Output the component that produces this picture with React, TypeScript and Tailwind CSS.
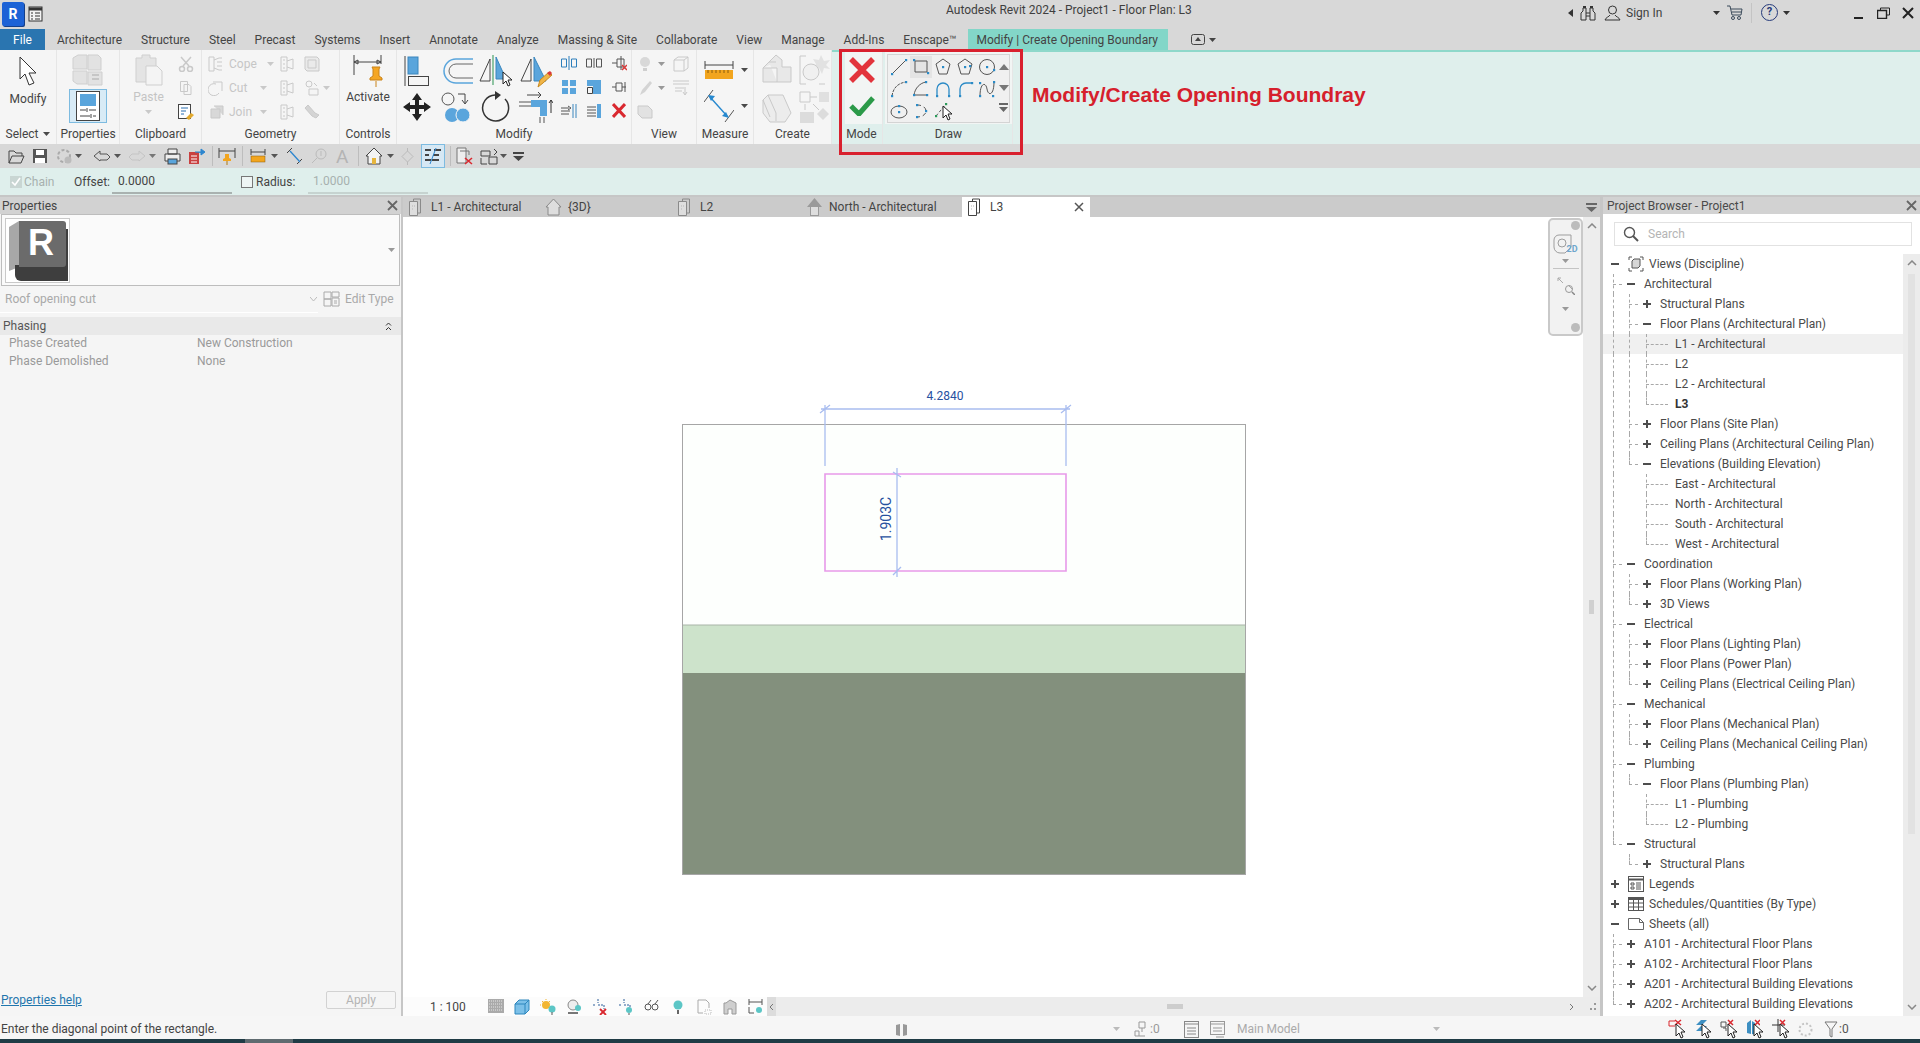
import React from 'react';

const G = '#c9c9c9';
const D = '#4a4a4a';
const B = '#5aa5dc';

const I = ({ w, h, children, className = '' }: { w: number; h: number; children?: React.ReactNode; className?: string }) => (
  <svg width={w} height={h} viewBox={`0 0 ${w} ${h}`} fill="none" className={`shrink-0 ${className}`}>
    {children}
  </svg>
);

const Caret = ({ c = D, className = '' }: { c?: string; className?: string }) => (
  <I w={7} h={4} className={className}><path d="M0 0h7L3.5 4z" fill={c} /></I>
);

const Panel = ({ w, label, children, dim }: { w: string; label: React.ReactNode; children?: React.ReactNode; dim?: boolean }) => (
  <div className={`${w} flex flex-col border-r border-[#e6e6e6]`}>
    <div className="h-[74px] flex">{children}</div>
    <div className={`h-[20px] flex items-center justify-center ${dim ? 'bg-[#dfefec]' : ''}`}>{label}</div>
  </div>
);

const tabs = ['Architecture', 'Structure', 'Steel', 'Precast', 'Systems', 'Insert', 'Annotate', 'Analyze', 'Massing & Site', 'Collaborate', 'View', 'Manage', 'Add-Ins', 'Enscape™'];

type Row = { d: number; t: string; o?: '+' | '-'; kind?: 'views' | 'legend' | 'sched' | 'sheet'; bold?: boolean; sel?: boolean };

const tree: Row[] = [
  { d: 0, t: 'Views (Discipline)', o: '-', kind: 'views' },
  { d: 1, t: 'Architectural', o: '-' },
  { d: 2, t: 'Structural Plans', o: '+' },
  { d: 2, t: 'Floor Plans (Architectural Plan)', o: '-' },
  { d: 3, t: 'L1 - Architectural', sel: true },
  { d: 3, t: 'L2' },
  { d: 3, t: 'L2 - Architectural' },
  { d: 3, t: 'L3', bold: true },
  { d: 2, t: 'Floor Plans (Site Plan)', o: '+' },
  { d: 2, t: 'Ceiling Plans (Architectural Ceiling Plan)', o: '+' },
  { d: 2, t: 'Elevations (Building Elevation)', o: '-' },
  { d: 3, t: 'East - Architectural' },
  { d: 3, t: 'North - Architectural' },
  { d: 3, t: 'South - Architectural' },
  { d: 3, t: 'West - Architectural' },
  { d: 1, t: 'Coordination', o: '-' },
  { d: 2, t: 'Floor Plans (Working Plan)', o: '+' },
  { d: 2, t: '3D Views', o: '+' },
  { d: 1, t: 'Electrical', o: '-' },
  { d: 2, t: 'Floor Plans (Lighting Plan)', o: '+' },
  { d: 2, t: 'Floor Plans (Power Plan)', o: '+' },
  { d: 2, t: 'Ceiling Plans (Electrical Ceiling Plan)', o: '+' },
  { d: 1, t: 'Mechanical', o: '-' },
  { d: 2, t: 'Floor Plans (Mechanical Plan)', o: '+' },
  { d: 2, t: 'Ceiling Plans (Mechanical Ceiling Plan)', o: '+' },
  { d: 1, t: 'Plumbing', o: '-' },
  { d: 2, t: 'Floor Plans (Plumbing Plan)', o: '-' },
  { d: 3, t: 'L1 - Plumbing' },
  { d: 3, t: 'L2 - Plumbing' },
  { d: 1, t: 'Structural', o: '-' },
  { d: 2, t: 'Structural Plans', o: '+' },
  { d: 0, t: 'Legends', o: '+', kind: 'legend' },
  { d: 0, t: 'Schedules/Quantities (By Type)', o: '+', kind: 'sched' },
  { d: 0, t: 'Sheets (all)', o: '-', kind: 'sheet' },
  { d: 1, t: 'A101 - Architectural Floor Plans', o: '+' },
  { d: 1, t: 'A102 - Architectural Floor Plans', o: '+' },
  { d: 1, t: 'A201 - Architectural Building Elevations', o: '+' },
  { d: 1, t: 'A202 - Architectural Building Elevations', o: '+' },
];

const railLeft = ['', 'left-[10px]', 'left-[26px]', 'left-[43px]'];
const dashW = ['', 'w-[9px]', 'w-[9px]', 'w-[22px]'];
const indent = ['pl-[7px]', 'pl-[23px]', 'pl-[39px]', 'pl-[72px]'];
const textGap = ['ml-[5px]', 'ml-[8px]', 'ml-[8px]', ''];

const continues = (i: number, level: number) => {
  for (let j = i + 1; j < tree.length; j++) {
    if (tree[j].d < level) return false;
    if (tree[j].d === level) return true;
  }
  return false;
};

const Toggle = ({ o }: { o: '+' | '-' }) => (
  <I w={10} h={10}>
    <path d="M1 5h8" stroke="#4d4d4d" strokeWidth="2" />
    {o === '+' && <path d="M5 1v8" stroke="#4d4d4d" strokeWidth="2" />}
  </I>
);

const KindIcon = ({ kind }: { kind: Row['kind'] }) => {
  if (kind === 'views')
    return (
      <I w={16} h={16} className="ml-[8px]">
        <path d="M1 4V1h3M12 1h3v3M15 12v3h-3M4 15H1v-3" stroke="#555" />
        <path d="M4 5l2-2h6v7l-2 2H4z" fill="#d6d6d6" stroke="#555" />
      </I>
    );
  if (kind === 'legend')
    return (
      <I w={16} h={16} className="ml-[8px]">
        <rect x=".5" y=".5" width="15" height="15" stroke="#555" />
        <path d="M.5 3.5h15" stroke="#555" strokeWidth="2" />
        <path d="M3 7h3v2H3zM3 11h3v2H3zM8 7h5M8 9h5M8 11h5M8 13h5" stroke="#555" />
      </I>
    );
  if (kind === 'sched')
    return (
      <I w={16} h={14} className="ml-[8px]">
        <rect x=".5" y=".5" width="15" height="13" stroke="#555" />
        <path d="M.5 2h15" stroke="#555" strokeWidth="2" />
        <path d="M.5 6h15M.5 10h15M5.5 2v12M10.5 2v12" stroke="#555" />
      </I>
    );
  return (
    <I w={16} h={12} className="ml-[8px]">
      <path d="M.5.5h11l4 4v7H.5z" stroke="#666" />
      <path d="M11.5.5v4h4" stroke="#666" />
    </I>
  );
};

const DocIcon = ({ dark }: { dark?: boolean }) => (
  <I w={17} h={18}>
    <path d="M5.5 3.5V1h7v14H10" stroke={dark ? '#444' : '#8a8a8a'} />
    <path d="M1.5 3.5h8v14h-8z" fill={dark ? '#fff' : '#dedede'} stroke={dark ? '#444' : '#8a8a8a'} />
    <path d="M4 8h3M4 11h2" stroke="#b5b5b5" strokeDasharray="1 1" />
  </I>
);

const Cursor = ({ className = '' }: { className?: string }) => (
  <I w={11} h={17} className={className}>
    <path d="M1 1v12l3-3 2 5 2-1-2-5h4z" fill="#fff" stroke="#222" />
  </I>
);

const dot = (x: number, y: number) => <rect x={x - 1} y={y - 1} width="2.2" height="2.2" fill="#2b8ac6" />;

const TitleBar = () => (
  <div className="h-[28px] flex items-center shrink-0">
    <div className="w-[946px] flex items-center">
      <div className="ml-[2px] w-[22px] h-[24px] rounded-[2px] bg-[#1c62d6] flex items-center justify-center text-white font-bold text-[14px] shadow-[1px_1px_0_#143f8a]">R</div>
      <I w={16} h={16} className="ml-[4px]">
        <rect x="1" y="1" width="13" height="14" fill="#f4f4f4" stroke="#333" />
        <path d="M1 3h13" stroke="#333" strokeWidth="3" />
        <path d="M3 7h2M7 7h5M3 10h2M7 10h5M3 13h2M7 13h5" stroke="#333" />
      </I>
    </div>
    <span className="-mt-[8px] text-[12px] text-[#3f3f3f]">Autodesk Revit 2024 - Project1 - Floor Plan: L3</span>
    <div className="ml-auto -mt-[3px] flex items-center">
      <I w={5} h={8}><path d="M5 0v8L0 4z" fill="#333" /></I>
      <I w={16} h={16} className="ml-[7px]">
        <path d="M1 15V8l2-2V3h3v12zM15 15V8l-2-2V3h-3v12zM6 8h4M6 11h4" stroke="#333" />
        <path d="M3 1h3v2H3zM10 1h3v2h-3z" fill="#333" />
      </I>
      <I w={17} h={16} className="ml-[8px]">
        <circle cx="8.500" cy="5" r="4" stroke="#333" />
        <path d="M1 15c1-3 4-3 5-5M16 15c-1-3-4-3-5-5M1 15h15" stroke="#333" />
      </I>
      <span className="ml-[5px] w-[87px] text-[12px] text-[#3f3f3f]">Sign In</span>
      <Caret c="#333" />
      <I w={16} h={15} className="ml-[7px]">
        <path d="M0 1h3l2 9h9l1-6H4" stroke="#3a4a5a" />
        <path d="M5 7h9" stroke="#3a4a5a" />
        <circle cx="6" cy="13" r="1.500" stroke="#3a4a5a" />
        <circle cx="12" cy="13" r="1.500" stroke="#3a4a5a" />
      </I>
      <div className="ml-[8px] w-px h-[20px] bg-[#c4c4c4]" />
      <div className="ml-[9px] w-[17px] h-[17px] rounded-full border border-[#24397a] flex items-center justify-center text-[#24397a] font-bold text-[11px]">?</div>
      <Caret c="#333" className="ml-[5px]" />
      <I w={10} h={4} className="ml-[64px] mt-[10px]"><path d="M0 2h9" stroke="#222" strokeWidth="2" /></I>
      <I w={13} h={12} className="ml-[13px]">
        <path d="M3.500 3V1h9v7H10" stroke="#222" />
        <path d="M.5 3.500h9v8h-9z" stroke="#222" strokeWidth="1.400" />
      </I>
      <I w={12} h={12} className="ml-[12px] mr-[6px]"><path d="M1 1l10 10M11 1L1 11" stroke="#222" strokeWidth="2" /></I>
    </div>
  </div>
);

const MenuBar = () => (
  <div className="h-[22px] flex items-end shrink-0 text-[12px] text-[#444]">
    <div className="w-[45px] h-[21px] bg-[#2a75b0] text-white flex items-center justify-center">File</div>
    <div className="pl-[12px] flex gap-[19px]">
      {tabs.map((t) => (
        <div key={t} className="h-[21px] flex items-center">{t}</div>
      ))}
    </div>
    <div className="ml-[12px] h-[21px] px-[8px] w-[200px] bg-[#83d6c8] flex items-center whitespace-nowrap">Modify | Create Opening Boundary</div>
    <I w={15} h={11} className="ml-[23px] mb-[5px]">
      <rect x=".5" y=".5" width="13" height="10" rx="2" stroke="#444" />
      <path d="M4 7h6L7 3z" fill="#444" />
    </I>
    <Caret c="#444" className="ml-[3px] mb-[8px]" />
  </div>
);

const Ribbon = () => (
  <div className="h-[94px] flex shrink-0 shadow-[inset_0_2px_0_#8ed8ca] bg-[#dfefec] text-[12px] text-[#444]">
    <div className="flex bg-[#f5f5f5] w-[832px] h-[94px]">
      <Panel w="w-[57px]" label={<span className="flex items-center gap-[5px]">Select <Caret /></span>}>
        <div className="w-full flex flex-col items-center pt-[6px]">
          <I w={22} h={32}><path d="M3 1v22l5-5 4 11 5-2-5-10h7z" fill="#fff" stroke="#333" /></I>
          <span className="mt-[2px]">Modify</span>
        </div>
      </Panel>
      <Panel w="w-[63px]" label="Properties">
        <div className="w-full flex flex-col items-center pt-[4px]">
          <I w={32} h={32}>
            <path d="M1 4l5-3h9v14H1zM16 1h10l3 3v12H16zM1 17h14v13H5l-4-3zM16 18h14v13H16z" fill="#e2e2e2" stroke="#cfcfcf" />
            <path d="M20 21h7M20 25h7" stroke="#aaa" />
          </I>
          <div className="mt-[3px] w-[38px] h-[34px] bg-[#d8ebf6] border border-[#7dbbe0] flex items-center justify-center">
            <I w={24} h={30}>
              <rect x=".5" y=".5" width="23" height="29" fill="#fff" stroke="#444" />
              <rect x="4" y="3" width="16" height="12" fill={B} />
              <path d="M4 19h6M13 19h7M4 25h10M17 25h3M11 17v4M15 23v4" stroke="#444" />
            </I>
          </div>
        </div>
      </Panel>
      <Panel w="w-[82px]" label="Clipboard">
        <div className="w-[57px] flex flex-col items-center pt-[4px] text-[#c4c4c4]">
          <I w={28} h={32}>
            <path d="M1 4h6V1h8v3h6v12h-6v12H1z" fill="#e4e4e4" stroke="#cfcfcf" />
            <path d="M11 12h11l5 5v14H11z" fill="#f4f4f4" stroke="#cfcfcf" />
          </I>
          <span className="mt-[2px]">Paste</span>
          <Caret c={G} className="mt-[4px]" />
        </div>
        <div className="flex flex-col pt-[6px] gap-[8px] ml-[1px]">
          <I w={16} h={16}><path d="M3 1l8 9M13 1L5 10" stroke={G} strokeWidth="1.500" /><circle cx="4" cy="13" r="2.500" stroke={G} strokeWidth="1.500" /><circle cx="12" cy="13" r="2.500" stroke={G} strokeWidth="1.500" /></I>
          <I w={16} h={16}><path d="M2.500 1.500h7v10h-7zM6 4.500h5l2 2v8H6z" fill="#f5f5f5" stroke={G} /></I>
          <I w={17} h={16}>
            <rect x=".5" y=".5" width="12" height="14" fill="#fff" stroke="#444" />
            <path d="M3 4h7M3 7h5M3 10h3" stroke="#2b6fb0" />
            <path d="M8 14l5-5 3 2-5 5z" fill="#e2a92d" />
          </I>
        </div>
      </Panel>
      <Panel w="w-[138px]" label="Geometry">
        <div className="flex flex-col pt-[2px] pl-[6px] text-[#c6c6c6]">
          {[
            ['Cope', 'M1 1h5v14H1zM6 4l5-2h3M6 12l5 2h3M9 6h5M9 10h5'],
            ['Cut', 'M8 4a6 6 0 1 0 3 9M5 2h9M14 2v9'],
            ['Join', 'M3 5h9v9H3zM6 2h9v9'],
          ].map(([t, d], i) => (
            <div key={t} className="h-[24px] flex items-center">
              <div className="w-[72px] flex items-center">
                <I w={16} h={16}><path d={d} stroke={G} fill={i === 2 ? '#d8d8d8' : 'none'} /></I>
                <span className={i === 0 ? 'ml-[5px] w-[33px]' : 'ml-[5px] w-[26px]'}>{t}</span>
                <Caret c={G} className="ml-[5px]" />
              </div>
              <I w={16} h={16}>
                <path d="M1 1h6v14H1zM7 5l6-2v10l-6-2M3 4h2M3 8h2M3 12h2" stroke={G} />
              </I>
              <I w={16} h={16} className="ml-[8px]">
                {i === 0 && <path d="M1 1h12l2 2v12H3l-2-2zM4 4h8v8H4z" stroke={G} fill="#eaeaea" />}
                {i === 1 && <><circle cx="5" cy="4" r="3" stroke={G} /><path d="M5 9h9v6H5zM10 3l3 3" stroke={G} /></>}
                {i === 2 && <path d="M1 4l3-3 7 8 4 2-3 3-4-2z" fill="#d4d4d4" stroke={G} />}
              </I>
              {i === 1 && <Caret c={G} className="ml-[3px]" />}
            </div>
          ))}
        </div>
      </Panel>
      <Panel w="w-[57px]" label="Controls">
        <div className="w-full flex flex-col items-center pt-[4px]">
          <I w={30} h={34}>
            <path d="M1 1v20M28 1v9M1 8h27M1 8l4-2v4zM28 8l-4-2v4z" stroke="#444" />
            <path d="M19 13h8l-1 2v7l3 2v2H17v-2l3-2v-7z" fill="#f5a623" stroke="#c9831b" />
            <path d="M23 27v6" stroke="#c9831b" />
          </I>
          <span>Activate</span>
        </div>
      </Panel>
      <Panel w="w-[235px]" label="Modify">
        <div className="w-[160px] grid grid-cols-[40px_40px_38px_42px] pt-[4px] justify-items-center items-center content-start gap-y-[2px]">
          <I w={26} h={30}>
            <path d="M1 0v30" stroke="#444" />
            <rect x="4" y="1" width="10" height="17" fill={B} stroke="#3a86bd" />
            <rect x="4.500" y="20.500" width="20" height="9" stroke="#444" />
          </I>
          <I w={34} h={28}>
            <path d="M33 2H16a12 12 0 0 0 0 24h17" stroke={B} strokeWidth="1.500" />
            <path d="M33 7H16a7 7 0 0 0 0 14h17" stroke="#666" />
          </I>
          <div className="flex">
            <I w={34} h={32}>
              <path d="M1 27L11 5v22z" stroke="#444" />
              <path d="M14 1v30" stroke="#4aa36c" strokeWidth="1.200" />
              <path d="M17 3l10 22H17z" fill={B} stroke="#3a86bd" />
            </I>
            <Cursor className="-ml-[11px] mt-[17px]" />
          </div>
          <I w={32} h={34}>
            <path d="M1 27L11 5v22z" stroke="#444" />
            <path d="M14 3l12 24H14z" fill={B} stroke="#3a86bd" />
            <path d="M18 33l2-7 9-8 3 3-9 8z" fill="#f0b548" stroke="#c98a1d" />
            <path d="M27 19l3-2 2 2-2 3z" fill="#d93a3a" />
          </I>
          <I w={28} h={30}>
            <path d="M14 1l5 7h-3v5h5v-3l7 5-7 5v-3h-5v5h3l-5 7-5-7h3v-5H7v3L0 15l7-5v3h5V8H9z" fill="#222" />
          </I>
          <I w={32} h={32}>
            <circle cx="7" cy="8" r="6" stroke="#555" />
            <path d="M17 3h7v9M21 9l3 4 3-4" stroke="#444" />
            <circle cx="11" cy="24" r="7" fill={B} />
            <circle cx="22" cy="24" r="7" fill={B} stroke="#f5f5f5" />
          </I>
          <I w={30} h={34}>
            <path d="M24 9a13 13 0 1 1-10-4" stroke="#333" strokeWidth="1.500" />
            <path d="M14 1l6 4-6 5z" fill="#333" />
          </I>
          <I w={34} h={32}>
            <path d="M2 8h14l-3-3m3 3l-3 3" stroke="#444" transform="translate(6 -4)" />
            <path d="M0 11h18M0 15h14" stroke="#555" />
            <path d="M12 9h16v16h-7v-9h-9z" fill={B} />
            <path d="M21 26v6M25 26v6" stroke="#555" />
            <path d="M32 22V9m-2 3l2-3 2 3" stroke="#333" />
          </I>
        </div>
        <div className="flex-1 grid grid-cols-3 pt-[5px] content-start gap-y-[8px] justify-items-center">
          <I w={16} h={16}><path d="M.5 4h5v8h-5zM10.500 4h5v8h-5zM8 1v14" stroke="#2d7fbc" /></I>
          <I w={16} h={16}><path d="M.5 4h5v8h-5zM10.500 4h5v8h-5zM8 3v10" stroke="#555" /></I>
          <I w={16} h={16}><path d="M1 8h5M6 4h7v8H6zM10 1v14" stroke="#555" /><path d="M11 10l5 5m0-5l-5 5" stroke="#d93a3a" strokeWidth="1.500" /></I>
          <I w={16} h={16}><path d="M1 1h6v6H1zM9 1h6v6H9zM1 9h6v6H1zM9 9h6v6H9z" fill={B} /></I>
          <I w={16} h={16}><path d="M1 1h14v14H7V7H1z" fill={B} /><path d="M1.500 8.500h5v6h-5z" stroke="#444" /></I>
          <I w={16} h={16}><path d="M1 8h4M5 4h6v8H5zM11 8h4M14 3v10" stroke="#555" /></I>
          <I w={16} h={16}><path d="M0 5h8M0 8h9M0 11h8" stroke="#555" /><path d="M7 3l3 2-3 2" stroke="#555" /><path d="M12 1v14M15 1v14" stroke="#3a86bd" /></I>
          <I w={16} h={16}><path d="M1 4h9M1 7h9M1 10h9M1 13h9" stroke="#555" /><path d="M11 1h4v14h-4z" fill={B} /></I>
          <I w={14} h={15}><path d="M1 1l12 13M13 1L1 14" stroke="#d9282f" strokeWidth="3" /></I>
        </div>
      </Panel>
      <Panel w="w-[65px]" label="View">
        <div className="flex flex-col pt-[5px] pl-[7px] gap-[7px]">
          <div className="flex items-center h-[17px]">
            <I w={14} h={16}><circle cx="6" cy="6" r="5" fill="#d8d8d8" /><path d="M4 12h4v3H4z" fill="#cfcfcf" /></I>
            <Caret c="#999" className="ml-[5px]" />
            <I w={16} h={16} className="ml-[8px]"><path d="M1 4h10v11H1zM1 4l4-3h10v11l-4 3M11 4l4-3" stroke={G} /></I>
          </div>
          <div className="flex items-center h-[17px]">
            <I w={14} h={16}><path d="M1 15l2-5 8-9 2 2-7 9z" fill="#d4d4d4" /></I>
            <Caret c="#999" className="ml-[5px]" />
            <I w={16} h={16} className="ml-[8px]"><path d="M0 1h16M0 4h16M2 8h11M2 11h7M12 9v5m-2-2l2 3 2-3" stroke={G} /></I>
          </div>
          <I w={16} h={16} className="-ml-[2px]"><path d="M1 3h10l4 4v8H5l-4-4z" fill="#e2e2e2" stroke={G} /></I>
        </div>
      </Panel>
      <Panel w="w-[57px]" label="Measure">
        <div className="flex flex-col pl-[7px] pt-[11px]">
          <div className="flex items-center">
            <I w={30} h={18}>
              <path d="M1 0v8M29 0v8M1 4h28" stroke="#444" />
              <rect x="1" y="9" width="28" height="9" fill="#f2a51e" />
              <path d="M4 9v3M8 9v3M12 9v3M16 9v3M20 9v3M24 9v3" stroke="#8a5c0c" />
            </I>
            <Caret className="ml-[7px]" />
          </div>
          <div className="flex items-center mt-[10px]">
            <I w={30} h={34}>
              <path d="M0 13L9 1M21 33l9-12" stroke="#555" />
              <path d="M6 8l17 19" stroke="#2688cf" strokeWidth="1.400" />
              <path d="M4 6l7 1-4 5zM25 29l-7-2 4-4z" fill="#2688cf" />
            </I>
            <Caret className="ml-[7px]" />
          </div>
        </div>
      </Panel>
      <Panel w="w-[78px]" label="Create">
        <div className="grid grid-cols-[37px_32px] pl-[8px] pt-[4px] gap-y-[5px] content-start">
          <I w={30} h={30}><path d="M7 8l7-7 6 5v7h9v15H15V14H1v14h14M1 14l6-6h7" fill="#e8e8e8" stroke={G} /></I>
          <I w={32} h={32}>
            <path d="M7 2H1v28h6M20 30h6" stroke={G} />
            <path d="M22 1l3 6 6-1-4 5 4 4-6-1-2 6-3-6-6 1 3-5-3-5 6 1z" fill="#e2e2e2" />
            <circle cx="12" cy="18" r="8" fill="#f0f0f0" stroke={G} />
          </I>
          <I w={30} h={32}><path d="M1 9l5-5h15l8 18-6 9H8L1 22z" fill="#ececec" stroke={G} /><path d="M6 4l8 18v8M1 9l7 17" stroke={G} /></I>
          <I w={30} h={32}>
            <path d="M1 1h10v10H1zM11 6h7" stroke={G} />
            <rect x="20" y="1" width="10" height="10" fill="#e0e0e0" />
            <path d="M6 13v6M14 13l6 6" stroke={G} />
            <rect x="1" y="21" width="14" height="11" fill="#dcdcdc" />
            <path d="M24 17l6 6-6 6-6-6z" fill="#dcdcdc" />
          </I>
        </div>
      </Panel>
    </div>
    <div className="w-[13px]" />
    <div className="flex h-[94px] bg-[#f2f5f4]">
      <Panel w="w-[38px]" label={<span className="pr-[4px]">Mode</span>} dim>
        <div className="w-full flex flex-col items-center pt-[7px] pr-[4px]">
          <I w={26} h={26}><path d="M2 2l22 22M24 2L2 24" stroke="#e2343c" strokeWidth="5.500" /></I>
          <I w={26} h={20} className="mt-[13px]"><path d="M2 10l8 8L24 2" stroke="#2b9a49" strokeWidth="5" /></I>
        </div>
      </Panel>
    </div>
    <div className="w-[2px]" />
    <div className="flex h-[94px] bg-[#f2f5f4]">
      <Panel w="w-[128px]" label="Draw" dim>
        <div className="m-[2px] mt-[4px] mb-[1px] w-[125px] border border-[#d4d4d4] bg-[#f0f0f0] flex">
          <div className="w-[110px] grid grid-cols-5 content-start pt-[1px]">
            <div className="h-[22px] flex items-center justify-center">
              <I w={18} h={18}><path d="M3 15L15 3" stroke="#555" />{dot(2, 16)}{dot(16, 2)}</I>
            </div>
            <div className="h-[22px] flex items-center justify-center bg-[#e4e4e4]">
              <I w={18} h={18}><path d="M3 3h12v11H3z" stroke="#555" />{dot(2, 2)}{dot(16, 15)}</I>
            </div>
            <div className="h-[22px] flex items-center justify-center">
              <I w={18} h={18}><path d="M9 1l7 5-3 10H5L2 6z" stroke="#555" />{dot(9, 9)}</I>
            </div>
            <div className="h-[22px] flex items-center justify-center">
              <I w={18} h={18}><path d="M9 1l7 5-3 10H5L2 6z" stroke="#555" />{dot(9, 9)}{dot(14, 8)}</I>
            </div>
            <div className="h-[22px] flex items-center justify-center">
              <I w={18} h={18}><circle cx="9" cy="9" r="7.500" stroke="#555" />{dot(9, 9)}{dot(16, 12)}</I>
            </div>
            <div className="h-[22px] flex items-center justify-center">
              <I w={18} h={18}><path d="M2 16C3 8 8 3 16 2" stroke="#555" strokeDasharray="3 1" />{dot(2, 16)}{dot(16, 2)}</I>
            </div>
            <div className="h-[22px] flex items-center justify-center">
              <I w={18} h={18}><path d="M2 15C3 8 8 3 14 2M2 15h13" stroke="#555" />{dot(14, 2)}{dot(2, 15)}{dot(15, 15)}</I>
            </div>
            <div className="h-[22px] flex items-center justify-center">
              <I w={18} h={18}><path d="M3 16V9a6 6 0 0 1 12 0v7" stroke="#2b8ac6" strokeWidth="1.300" />{dot(3, 16)}{dot(15, 16)}</I>
            </div>
            <div className="h-[22px] flex items-center justify-center">
              <I w={18} h={18}><path d="M4 16V9a6 6 0 0 1 6-6h6" stroke="#2b8ac6" strokeWidth="1.300" />{dot(4, 16)}{dot(16, 3)}</I>
            </div>
            <div className="h-[22px] flex items-center justify-center">
              <I w={18} h={18}><path d="M2 16C2 2 8 2 9 9s7 7 7-7" stroke="#555" />{dot(2, 16)}{dot(2, 3)}{dot(16, 2)}{dot(15, 16)}</I>
            </div>
            <div className="h-[22px] flex items-center justify-center">
              <I w={18} h={18}><ellipse cx="9" cy="10" rx="8" ry="6" stroke="#555" />{dot(9, 4)}{dot(9, 10)}</I>
            </div>
            <div className="h-[22px] flex items-center justify-center">
              <I w={18} h={18}><path d="M5 3c6 0 9 3 9 6s-3 6-9 6" stroke="#555" strokeDasharray="4 3" />{dot(5, 3)}{dot(14, 9)}{dot(5, 15)}</I>
            </div>
            <div className="h-[22px] flex items-center justify-center">
              <div className="flex">
                <I w={14} h={18}><path d="M2 16L12 4" stroke="#555" strokeDasharray="3 2" /><rect x="1" y="15" width="2.200" height="2.200" fill="#2d9a5a" /><rect x="11" y="3" width="2.200" height="2.200" fill="#2d9a5a" /></I>
                <Cursor className="-ml-[6px] mt-[5px]" />
              </div>
            </div>
          </div>
          <div className="flex-1 flex flex-col items-center pt-[9px]">
            <I w={10} h={6}><path d="M0 6h10L5 0z" fill="#777" /></I>
            <I w={10} h={6} className="mt-[15px]"><path d="M0 0h10L5 6z" fill="#777" /></I>
            <I w={9} h={9} className="mt-[12px]"><path d="M0 0h9v2H0zM0 4h9L4.500 9z" fill="#666" /></I>
          </div>
        </div>
      </Panel>
    </div>
    <div className="pl-[19px] flex items-center h-[90px] font-['Liberation_Sans',Arial,sans-serif] font-bold text-[21px] text-[#d6202c] whitespace-nowrap">Modify/Create Opening Boundray</div>
  </div>
);

const Qat = () => (
  <div className="h-[24px] flex items-center shrink-0 pl-[8px]">
    <I w={17} h={15}><path d="M1 14V2h5l2 2h6v3M1 14l3-7h12l-3 7z" stroke="#444" /></I>
    <I w={16} h={16} className="ml-[7px]"><path d="M1 1h14v14H1z" fill="#555" /><rect x="4" y="2" width="8" height="5" fill="#fff" /><rect x="3" y="10" width="10" height="5" fill="#fff" /></I>
    <I w={17} h={17} className="ml-[8px]"><circle cx="8" cy="8" r="6" stroke="#aaa" strokeWidth="2" strokeDasharray="3 2" /><circle cx="12" cy="12" r="3.500" fill="#bbb" /></I>
    <Caret c="#555" className="ml-[2px]" />
    <I w={18} h={12} className="ml-[11px]"><path d="M1 6l6-5v3h7l3 3-3 3H7v1z" stroke="#555" /></I>
    <Caret c="#555" className="ml-[3px]" />
    <I w={18} h={12} className="ml-[7px]"><path d="M17 6l-6-5v3H4L1 7l3 3h7v1z" stroke="#c4c4c4" /></I>
    <Caret c="#777" className="ml-[3px]" />
    <I w={17} h={17} className="ml-[8px]"><path d="M4 1h9v5H4zM1 6h15v7H1z" fill="#eee" stroke="#444" /><rect x="4" y="11" width="9" height="5" fill="#5aa5dc" stroke="#444" /></I>
    <I w={17} h={17} className="ml-[7px]"><path d="M1 4h10v12H1z" fill="#c94040" /><path d="M3 8h6M3 11h6M3 14h6" stroke="#fff" /><path d="M7 4h6V1l4 3-4 3V5" fill="#2d86cf" stroke="#2d86cf" /></I>
    <div className="ml-[7px] w-px h-[20px] bg-[#bdbdbd]" />
    <I w={18} h={18} className="ml-[5px]"><path d="M1 1v10M17 1v10M1 4h16" stroke="#444" /><path d="M7 7h4v4l2 1v2H5v-2l2-1z" fill="#f2a51e" /><path d="M9 14v4" stroke="#b07a10" /></I>
    <div className="ml-[6px] w-px h-[20px] bg-[#bdbdbd]" />
    <I w={16} h={14} className="ml-[7px]"><path d="M1 0v6M15 0v6M1 3h14" stroke="#444" /><rect x="1" y="7" width="14" height="6" fill="#f2a51e" stroke="#8a5c0c" strokeWidth=".5" /></I>
    <Caret c="#555" className="ml-[5px]" />
    <I w={17} h={18} className="ml-[8px]"><path d="M1 6l5-5M11 17l5-5" stroke="#444" /><path d="M4 4l10 11" stroke="#2d86cf" strokeWidth="1.300" /></I>
    <I w={16} h={16} className="ml-[8px]"><circle cx="10" cy="6" r="5" stroke="#bbb" /><path d="M6 10l-5 5M10 3v5" stroke="#bbb" /></I>
    <span className="ml-[9px] text-[#b4b4b4] text-[19px] leading-none w-[16px]">A</span>
    <div className="ml-[6px] w-px h-[20px] bg-[#bdbdbd]" />
    <I w={18} h={18} className="ml-[6px]"><path d="M9 1L1 9h2v8h12V9h2z" stroke="#444" fill="#f3f3f3" /><rect x="7" y="11" width="4" height="6" fill="#e6b53c" /></I>
    <Caret c="#555" className="ml-[4px]" />
    <I w={15} h={17} className="ml-[6px]"><path d="M7.500 3L13 8.500 7.500 14 2 8.500zM7.500 0v3M7.500 14v3" stroke="#bbb" /></I>
    <div className="ml-[6px] w-[24px] h-[24px] bg-[#d6e8f4] border border-[#7dbbe0] flex items-center justify-center">
      <I w={18} h={18}><path d="M1 3h6M1 8h4M1 13h6M10 3h7M9 8h6M8 13h7" stroke="#444" strokeWidth="2" /><path d="M12 1L6 17" stroke="#2d86cf" /></I>
    </div>
    <div className="ml-[5px] w-px h-[20px] bg-[#bdbdbd]" />
    <I w={17} h={18} className="ml-[5px]"><path d="M1 1h9v15H1z" stroke="#777" fill="#eee" /><path d="M4 4h9v4" stroke="#777" /><path d="M9 11l7 6m0-6l-7 6" stroke="#d9282f" strokeWidth="1.600" /></I>
    <I w={18} h={17} className="ml-[7px]"><path d="M1 3h9v5H1zM9 9h8v7H9z" stroke="#444" /><path d="M1 10v6h6M14 1l3 3-3 3" stroke="#444" /></I>
    <Caret c="#555" className="ml-[2px]" />
    <I w={11} h={9} className="ml-[6px]"><path d="M0 0h11v2H0zM0 4h11L5.500 9z" fill="#444" /></I>
  </div>
);

const Options = () => (
  <div className="h-[27px] flex items-center shrink-0 bg-[#dfefec] text-[12px] text-[#444]">
    <div className="ml-[10px] w-[12px] h-[12px] bg-[#c9d6d3] flex items-center justify-center">
      <I w={10} h={10}><path d="M1 5l3 3 5-7" stroke="#fff" strokeWidth="1.600" /></I>
    </div>
    <span className="ml-[2px] w-[50px] text-[#a7b1af]">Chain</span>
    <span className="w-[38px]">Offset:</span>
    <div className="w-[120px] h-[24px] border-b-2 border-[#a9b2b0] pl-[6px] flex items-center">0.0000</div>
    <div className="ml-[9px] w-[12px] h-[12px] border border-[#777] bg-[#eef5f4]" />
    <span className="ml-[3px] w-[52px]">Radius:</span>
    <div className="w-[120px] h-[24px] border-b-2 border-[#c6d3d0] pl-[5px] flex items-center text-[#a7b1af]">1.0000</div>
  </div>
);

const PropsPanel = () => (
  <div className="w-[401px] h-full flex flex-col bg-[#f5f5f5] text-[12px]">
    <div className="h-[17px] bg-[#d2d2d2] flex items-center justify-between pl-[2px] pr-[3px] text-[#444]">
      <span>Properties</span>
      <I w={11} h={11}><path d="M1 1l9 9M10 1l-9 9" stroke="#666" strokeWidth="1.800" /></I>
    </div>
    <div className="mx-[1px] h-[72px] border border-[#bdbdbd] bg-[#fafafa] flex items-center justify-between pl-[3px] pr-[4px]">
      <div className="relative w-[65px] h-[65px] border border-[#c9c9c9] bg-white flex items-center justify-center">
        <I w={62} h={62}>
          <path d="M2 8l10-6v46L2 52z" fill="#a8a8a8" />
          <path d="M8 46h50v16H14a6 6 0 0 1-6-6z" fill="#3e3e3e" />
          <path d="M56 10h5v52h-5z" fill="#3e3e3e" />
          <path d="M12 2h44a3 3 0 0 1 3 3v40a3 3 0 0 1-3 3H12z" fill="#6b6b6b" />
        </I>
        <span className="absolute left-[22px] top-[2px] text-white font-bold text-[36px] leading-[44px] font-['Liberation_Sans',sans-serif]">R</span>
      </div>
      <Caret c="#999" />
    </div>
    <div className="h-[26px] flex items-center pl-[5px] text-[#a9a9a9]">
      <span className="w-[305px]">Roof opening cut</span>
      <I w={7} h={5}><path d="M0 0l3.500 4L7 0" stroke="#bbb" /></I>
      <I w={17} h={16} className="ml-[6px]"><path d="M1 1h7v7H1zM1 8h7v7H1zM9 1h7v5H9zM9 7h7v8H9zM11 10h3M11 12h3" stroke="#aaa" /></I>
      <span className="ml-[5px]">Edit Type</span>
    </div>
    <div className="h-[1px] w-[318px] bg-white mb-[4px]" />
    <div className="h-[18px] bg-[#e9e9e9] flex items-center justify-between pl-[3px] pr-[9px] text-[#555]">
      <span>Phasing</span>
      <I w={7} h={9}><path d="M1 3.500L3.500 1 6 3.500M1 8l2.500-2.500L6 8" stroke="#333" /></I>
    </div>
    <div className="flex flex-col text-[#9a9a9a] pl-[9px] -mt-[1px]">
      <div className="h-[18px] flex items-center"><span className="w-[188px]">Phase Created</span><span>New Construction</span></div>
      <div className="h-[18px] flex items-center"><span className="w-[188px]">Phase Demolished</span><span>None</span></div>
    </div>
    <div className="mt-auto h-[23px] mb-[5px] flex items-center justify-between pl-[1px] pr-[5px]">
      <span className="text-[#1f76ad] underline">Properties help</span>
      <div className="w-[70px] h-[18px] border border-[#d2d2d2] rounded-[2px] flex items-center justify-center text-[#b4b4b4]">Apply</div>
    </div>
  </div>
);

const viewTabs = [
  { w: 'w-[137px]', t: 'L1 - Architectural', icon: <DocIcon /> },
  { w: 'w-[132px]', t: '{3D}', icon: <I w={17} h={18}><path d="M8.500 1L1 9h2v8h11V9h2z" stroke="#8a8a8a" fill="#dedede" /></I> },
  { w: 'w-[129px]', t: 'L2', icon: <DocIcon /> },
  { w: 'w-[161px]', t: 'North - Architectural', icon: <I w={17} h={18}><path d="M8.500 0L16 9h-3v9H4V9H1z" fill="#9a9a9a" /><rect x="5" y="9" width="7" height="8" fill="#dedede" /></I> },
];

const ViewArea = () => (
  <div className="w-[1197px] h-full flex flex-col text-[12px]">
    <div className="h-[20px] bg-[#cbcbcb] flex items-center text-[#444] shrink-0">
      {viewTabs.map((t) => (
        <div key={t.t} className={`${t.w} h-full flex items-center pl-[5px] gap-[6px]`}>
          {t.icon}
          <span>{t.t}</span>
        </div>
      ))}
      <div className="w-[128px] h-full bg-white flex items-center pl-[5px] gap-[6px]">
        <DocIcon dark />
        <span className="w-[78px]">L3</span>
        <I w={10} h={10}><path d="M1 1l8 8M9 1L1 9" stroke="#555" strokeWidth="1.500" /></I>
      </div>
      <I w={11} h={9} className="ml-auto mr-[3px]"><path d="M0 0h11v2H0zM0 4h11L5.500 9z" fill="#666" /></I>
    </div>
    <div className="flex-1 flex min-h-0">
      <div className="flex-1 relative bg-white">
        <svg className="absolute inset-0 w-full h-full" viewBox="403 217 1180 780" fill="none">
          <rect x="682.500" y="424.500" width="563" height="450" fill="#fdfffd" stroke="#a6a6a6" />
          <rect x="683" y="625" width="562" height="48" fill="#cde3cb" />
          <path d="M683 625h562" stroke="#a9b5a8" />
          <rect x="683" y="673" width="562" height="201" fill="#83907d" />
          <path d="M821 409h249M825 405v61M1066 405v61M820 413l10-8M1061 413l10-8" stroke="#a9bdf0" strokeWidth="1.300" />
          <path d="M825 474h241v97H825z" stroke="#e79ae9" strokeWidth="1.600" />
          <path d="M897 468v109M893 472l8 5M893 575l8-8" stroke="#a9bdf0" strokeWidth="1.300" />
          <text x="945" y="400" textAnchor="middle" fontSize="12" fill="#26509f" fontFamily="Roboto, sans-serif">4.2840</text>
          <text x="0" y="0" textAnchor="middle" fontSize="14" fill="#26509f" fontFamily="Roboto, sans-serif" transform="translate(891 519) rotate(-90)">1.903C</text>
        </svg>
        <div className="absolute top-[1px] right-0 w-[35px] h-[118px] bg-[#f2f2f2] border-2 border-[#c9c9c9] rounded-[5px] flex flex-col items-center">
          <div className="self-end mr-[1px] mt-[1px] w-[9px] h-[9px] rounded-full bg-[#bcbcbc]" />
          <div className="flex items-end mt-[4px]">
            <I w={20} h={20}><path d="M6 1h12v12l-6 6H7a6 6 0 0 1-6-6V6a5 5 0 0 1 5-5z" stroke="#9d9d9d" /><circle cx="9" cy="9" r="4" stroke="#9d9d9d" /></I>
            <span className="-ml-[7px] text-[9px] leading-none font-bold text-[#6ea6cc]">2D</span>
          </div>
          <Caret c="#999" className="mt-[5px]" />
          <div className="w-[26px] h-px bg-[#c4c4c4] mt-[5px]" />
          <I w={18} h={18} className="mt-[8px]"><path d="M1 4V1h3M1 1l5 5M12 9l3 3" stroke="#aaa" /><circle cx="12" cy="12" r="3.500" stroke="#999" /><path d="M15 15l3 3" stroke="#888" strokeWidth="1.500" /></I>
          <Caret c="#999" className="mt-[12px]" />
          <div className="self-end mr-[1px] mt-auto mb-[2px] w-[9px] h-[9px] rounded-full bg-[#bcbcbc]" />
        </div>
      </div>
      <div className="w-[17px] bg-[#ededed] flex flex-col items-center justify-between py-[6px]">
        <I w={10} h={6}><path d="M1 5l4-4 4 4" stroke="#888" strokeWidth="1.500" /></I>
        <div className="w-[5px] h-[14px] bg-[#d0d0d0]" />
        <I w={10} h={6}><path d="M1 1l4 4 4-4" stroke="#888" strokeWidth="1.500" /></I>
      </div>
    </div>
    <div className="h-[19px] flex items-center shrink-0 bg-[#ececec]">
      <div className="w-[373px] h-full bg-[#fcfcfc] flex items-center">
        <span className="ml-[27px] w-[58px] text-[#444]">1 : 100</span>
        <div className="flex gap-[10px]">
          <I w={16} h={14}><rect width="16" height="14" fill="#aaa" /><path d="M1 2h14M1 5h14M1 8h14M1 11h14" stroke="#e6e6e6" strokeDasharray="1 1" /></I>
          <I w={16} h={16}><path d="M1 5l4-4h10v10l-4 4H1z" fill="#7cc0e8" stroke="#2d86bd" /><path d="M1 5h10v10M11 5l4-4" stroke="#2d86bd" /></I>
          <I w={16} h={16}><circle cx="6" cy="6" r="4" fill="#f2b632" /><path d="M6 0v1M0 6h1M2 2l1 1M10 2l-1 1" stroke="#f2b632" /><circle cx="12" cy="10" r="3.500" fill="#5cc6c6" /><path d="M12 13v3" stroke="#555" /></I>
          <I w={16} h={16}><circle cx="7" cy="6" r="5" fill="#eee" stroke="#888" /><circle cx="12" cy="9" r="3" fill="#5cc6c6" /><path d="M2 14h10" stroke="#777" strokeWidth="2" /></I>
          <I w={16} h={16}><path d="M6 0v4M1 6h2M6 6h6v4" stroke="#2d5f9a" strokeDasharray="2 1" /><path d="M8 10l6 6m0-6l-6 6" stroke="#d9282f" strokeWidth="1.800" /></I>
          <I w={16} h={16}><path d="M6 0v4M1 6h2M6 6h6v4" stroke="#2d5f9a" strokeDasharray="2 1" /><circle cx="11" cy="11" r="3" fill="#5cc6c6" /><path d="M11 14v2" stroke="#555" /></I>
          <I w={16} h={12}><circle cx="4" cy="8" r="3" stroke="#555" /><circle cx="11" cy="8" r="3" stroke="#555" /><path d="M4 5l3-4M11 5l3-4" stroke="#555" /></I>
          <I w={16} h={16}><circle cx="8" cy="6" r="4.500" fill="#5cc6c6" /><path d="M8 11v4" stroke="#666" strokeWidth="2" /></I>
          <I w={16} h={16}><path d="M2 1h8l3 3v5M2 1v13h5" stroke="#aaa" /><path d="M9 11h6v4H9z" stroke="#bbb" strokeDasharray="1 1" /></I>
          <I w={16} h={16}><path d="M4 4l4-3 6 3v11H10v-5H6v5H2V4z" fill="#cfcfcf" stroke="#999" /></I>
          <I w={16} h={16}><path d="M1 0v6M14 0v6M1 3h13M1 8v6M1 14h5" stroke="#555" /><circle cx="11" cy="11" r="3" fill="#5cc6c6" /></I>
        </div>
        <div className="ml-auto w-[9px] h-full bg-[#dcdcdc] flex items-center justify-center">
          <I w={5} h={8}><path d="M4 1L1 4l3 3" stroke="#777" /></I>
        </div>
      </div>
      <div className="flex-1 flex items-center h-full pl-[391px]">
        <div className="w-[16px] h-[5px] bg-[#cdcdcd]" />
        <I w={5} h={8} className="ml-auto"><path d="M1 1l3 3-3 3" stroke="#777" /></I>
      </div>
      <div className="w-[26px] flex justify-end pr-[3px] items-center">
        <I w={8} h={7}><path d="M5 0h2v2H5zM1 5h2v2H1zM5 5h2v2H5z" fill="#999" /></I>
      </div>
    </div>
  </div>
);

const Browser = () => (
  <div className="flex-1 h-full flex flex-col bg-white text-[12px] text-[#4a4a4a] min-w-0">
    <div className="h-[17px] bg-[#d2d2d2] flex items-center justify-between pl-[4px] pr-[3px] shrink-0">
      <span>Project Browser - Project1</span>
      <I w={11} h={11}><path d="M1 1l9 9M10 1l-9 9" stroke="#666" strokeWidth="1.800" /></I>
    </div>
    <div className="h-[40px] shrink-0 pl-[11px] pr-[8px] pt-[8px]">
      <div className="h-[24px] border border-[#e2e2e2] flex items-center pl-[8px] text-[#b4b4b4]">
        <I w={16} h={16}><circle cx="6.500" cy="6.500" r="5" stroke="#555" strokeWidth="1.400" /><path d="M10 10l5 5" stroke="#555" strokeWidth="2" /></I>
        <span className="ml-[9px]">Search</span>
      </div>
    </div>
    <div className="flex-1 flex min-h-0">
      <div className="flex-1 min-w-0 overflow-hidden">
        {tree.map((r, i) => (
          <div key={i} className={`relative h-[20px] flex items-center whitespace-nowrap ${indent[r.d]} ${r.sel ? 'bg-[#f0f0f0]' : ''} ${r.bold ? 'font-bold text-[#333]' : ''}`}>
            {[1, 2, 3].map((l) => {
              if (r.d < l) return null;
              const more = continues(i, l);
              if (r.d > l && !more) return null;
              return (
                <React.Fragment key={l}>
                  <span className={`absolute ${railLeft[l]} top-0 ${more ? 'h-[20px]' : 'h-[10px]'} border-l border-dashed border-[#a8a8a8]`} />
                  {r.d === l && <span className={`absolute ${railLeft[l]} top-[10px] ${dashW[l]} border-t border-dashed border-[#a8a8a8]`} />}
                </React.Fragment>
              );
            })}
            {r.o && <Toggle o={r.o} />}
            {r.kind && <KindIcon kind={r.kind} />}
            <span className={textGap[r.d]}>{r.t}</span>
          </div>
        ))}
      </div>
      <div className="w-[17px] bg-[#ececec] flex flex-col items-center py-[6px] shrink-0">
        <I w={10} h={6}><path d="M1 5l4-4 4 4" stroke="#888" strokeWidth="1.500" /></I>
        <div className="w-[7px] h-[560px] mt-[8px] bg-[#e2e2e2]" />
        <I w={10} h={6} className="mt-auto"><path d="M1 1l4 4 4-4" stroke="#888" strokeWidth="1.500" /></I>
      </div>
    </div>
  </div>
);

const selIcons = [
  <I key="a" w={14} h={14}><path d="M7 2H1v5h6" stroke="#d9282f" /><path d="M7 6l6-5m0 5L7 1" stroke="#d9282f" strokeWidth="1.500" /></I>,
  <I key="b" w={14} h={14}><path d="M2 6l5-5h6L8 6zM2 12l5-5h6l-5 5z" fill="#3d8fc2" /></I>,
  <I key="c" w={14} h={14}><path d="M1 3h5v5H1zM3 9h3v3" stroke="#555" /><path d="M8 6l5-5m0 5L8 1" stroke="#d9282f" strokeWidth="1.500" /></I>,
  <I key="d" w={14} h={17}><path d="M1 4l4-3v14l-4-1zM6 2l3 2v12l-3-1z" fill="#3d8fc2" /><path d="M9 6l5-5m0 5L9 1" stroke="#d9282f" strokeWidth="1.500" /></I>,
  <I key="e" w={14} h={14}><path d="M6 0v13M0 6h13" stroke="#333" /><path d="M8 6l5-5m0 5L8 1" stroke="#d9282f" strokeWidth="1.500" /></I>,
];

const Status = () => (
  <div className="h-[23px] pt-[3px] bg-[#f6f6f6] flex items-center shrink-0 text-[12px]">
    <span className="ml-[1px] w-[893px] text-[#444]">Enter the diagonal point of the rectangle.</span>
    <I w={15} h={15}><path d="M2 3l4-1v12l-4-1zM9 2l4 1v10l-4 1z" fill="#999" /></I>
    <Caret c="#bbb" className="ml-[204px]" />
    <I w={12} h={17} className="ml-[14px]"><path d="M5 1h6v6H5zM1 10h4v5H1zM5 15h6M8 7v4" stroke="#999" /></I>
    <span className="ml-[4px] w-[34px] text-[#999]">:0</span>
    <I w={15} h={17}><rect x=".5" y=".5" width="14" height="16" stroke="#888" /><path d="M.5 3h14M3 7h9M3 10h9M3 13h9" stroke="#888" /></I>
    <I w={15} h={17} className="ml-[11px]"><rect x=".5" y=".5" width="14" height="13" stroke="#999" /><path d="M.5 3h14M3 7h9M3 10h9M6 16h8" stroke="#999" /></I>
    <span className="ml-[12px] w-[196px] text-[#aaa]">Main Model</span>
    <Caret c="#bbb" />
    <div className="ml-[228px] flex items-center">
      {selIcons.map((ic) => (
        <div key={ic.key} className="w-[26px] flex">
          {ic}
          <Cursor className="-ml-[7px] mt-[4px]" />
        </div>
      ))}
      <div className="w-[26px]">
        <I w={15} h={15}><circle cx="7.500" cy="7.500" r="6" stroke="#c4c4c4" strokeWidth="2" strokeDasharray="2 2" /></I>
      </div>
      <div className="flex items-center"><I w={14} h={17}><path d="M1 1h12L8 8v8l-2-1V8z" stroke="#777" /></I><span className="ml-[1px] text-[#555]">:0</span></div>
    </div>
  </div>
);

export default function App() {
  return (
    <div className="relative w-[1920px] h-[1043px] overflow-hidden bg-[#d8d8d8] flex flex-col font-['Roboto',sans-serif]">
      <TitleBar />
      <MenuBar />
      <Ribbon />
      <Qat />
      <Options />
      <div className="flex-1 flex min-h-0 bg-[#c6c6c6] pt-[2px]">
        <PropsPanel />
        <div className="w-[2px]" />
        <ViewArea />
        <div className="w-[3px]" />
        <Browser />
      </div>
      <Status />
      <div className="h-[4px] shrink-0 bg-[#1f3b45] flex">
        <div className="ml-[245px] w-[48px] bg-[#5f6b70]" />
      </div>
      <div className="absolute left-[839px] top-[49px] w-[184px] h-[106px] border-[3px] border-[#d9202e] pointer-events-none" />
    </div>
  );
}
